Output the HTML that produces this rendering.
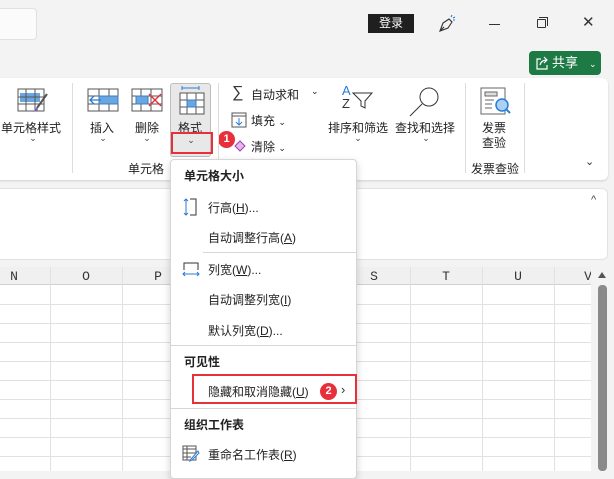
<!DOCTYPE html>
<html><head><meta charset="utf-8"><style>
*{margin:0;padding:0;box-sizing:border-box}
body{width:614px;height:471px;overflow:hidden;background:#f3f3f3;font-family:"Liberation Sans","Noto Sans CJK SC",sans-serif;font-size:12px;color:#222;position:relative}
.a{position:absolute;white-space:nowrap}
.sep{position:absolute;width:1px;background:#dcdcdc}
.lbl{position:absolute;transform:translateX(-50%);text-align:center;white-space:nowrap;font-size:12px}
.chev{position:absolute;font-size:9px;transform:translateX(-50%);color:#444}
.hline{position:absolute;left:0;width:591px;height:1px;background:#e1e1e1}
.vline{position:absolute;top:267px;bottom:0;width:1px;background:#e1e1e1}
.col{position:absolute;top:267px;height:18px;line-height:20px;font-family:"Liberation Mono",monospace;font-size:13px;color:#333;transform:translateX(-50%)}
.mi{position:absolute;left:208px;font-size:12px;color:#222}
.mb{position:absolute;left:184px;font-size:12px;font-weight:bold;color:#222}
.badge{position:absolute;width:17px;height:17px;border-radius:50%;background:#e8303a;color:#fff;font-size:11px;font-weight:bold;text-align:center;line-height:17px}
</style></head><body>
<!-- title bar -->
<div class="a" style="left:-4px;top:8px;width:41px;height:32px;background:#fbfbfb;border:1px solid #e0e0e0;border-radius:4px"></div>
<div class="a" style="left:368px;top:14px;width:46px;height:19px;background:#1f1f1f;color:#fff;text-align:center;line-height:19px;font-size:12px">登录</div>
<svg class="a" style="left:437px;top:14px" width="20" height="20" viewBox="0 0 20 20" fill="none" stroke="#333" stroke-width="1.1"><path d="M3 17 L6 9 L12 5 L15 8 L11 14 Z M3 17 L7 13"/><path d="M14 3 L15 1 M16 4 L18 3 M16 6 L18 6" stroke="#2a7bd4"/></svg>
<div class="a" style="left:489px;top:24px;width:11px;height:1px;background:#333"></div>
<div class="a" style="left:537px;top:19px;width:9px;height:9px;border:1px solid #333;border-radius:1px"></div>
<div class="a" style="left:539px;top:17px;width:9px;height:9px;border-top:1px solid #333;border-right:1px solid #333"></div>
<div class="a" style="left:582px;top:13px;font-size:15px;color:#333">✕</div>
<!-- share -->
<div class="a" style="left:529px;top:51px;width:72px;height:24px;background:#1e7a45;border-radius:4px;color:#fff;font-size:13px;line-height:24px">
<svg class="a" style="left:6px;top:5px" width="14" height="14" viewBox="0 0 14 14" fill="none" stroke="#fff" stroke-width="1.2"><path d="M6 3H2v10h10V9"/><path d="M5 9 C6 5 9 4 12 4 M9 1 L12 4 L9 7"/></svg>
<span class="a" style="left:23px;top:0">共享</span><span class="a" style="left:60px;top:1px;font-size:9px">⌄</span></div>
<!-- ribbon panel -->
<div class="a" style="left:-10px;top:78px;width:618px;height:102px;background:#fff;border-radius:6px;box-shadow:0 1px 2px rgba(0,0,0,.15)"></div>
<!-- 单元格样式 -->
<svg class="a" style="left:17px;top:88px" width="32" height="26" viewBox="0 0 32 26"><rect x="1" y="1" width="26" height="22" fill="#fff" stroke="#555"/><rect x="3" y="5" width="20" height="9" fill="#6aa7e0"/><path d="M1 9H27M1 16H27M9 1V23M18 1V23" stroke="#555" stroke-width="1"/><path d="M30 6 L20 20" stroke="#555" stroke-width="2"/><path d="M20 19 l-4 5 l5 -2 z" fill="#7c5cc4"/></svg>
<div class="lbl" style="left:31px;top:119px">单元格样式</div><div class="chev" style="left:33px;top:133px">⌄</div>
<div class="sep" style="left:72px;top:83px;height:90px"></div>
<!-- 插入 -->
<svg class="a" style="left:87px;top:88px" width="32" height="24" viewBox="0 0 32 24"><rect x="1" y="1" width="30" height="22" fill="#fff" stroke="#555"/><path d="M1 8H31M1 16H31M12 1V23M22 1V23" stroke="#555"/><rect x="12" y="8" width="19" height="8" fill="#6aa7e0" stroke="#3c7cc4"/><path d="M14 12H3M7 8L3 12L7 16" stroke="#2a7bd4" fill="none" stroke-width="1.3"/></svg>
<div class="lbl" style="left:102px;top:119px">插入</div><div class="chev" style="left:103px;top:133px">⌄</div>
<!-- 删除 -->
<svg class="a" style="left:131px;top:88px" width="32" height="24" viewBox="0 0 32 24"><rect x="1" y="1" width="30" height="22" fill="#fff" stroke="#555"/><path d="M1 8H31M1 16H31M10 1V23M20 1V23" stroke="#555"/><rect x="5" y="8" width="12" height="8" fill="#6aa7e0" stroke="#3c7cc4"/><path d="M18 6L30 18M30 6L18 18" stroke="#e8303a" stroke-width="1.4"/></svg>
<div class="lbl" style="left:147px;top:119px">删除</div><div class="chev" style="left:147px;top:133px">⌄</div>
<!-- 格式 -->
<div class="a" style="left:170px;top:83px;width:41px;height:74px;background:#e8e8e8;border:1px solid #bdbdbd;border-radius:3px"></div>
<svg class="a" style="left:175px;top:85px" width="32" height="30" viewBox="0 0 32 30"><path d="M7 3H24M7 1V5M24 1V5" stroke="#2a7bd4"/><rect x="5" y="8" width="24" height="21" fill="#fff" stroke="#555"/><path d="M5 15H29M5 22H29M12 8V29M21 8V29" stroke="#555"/><rect x="12" y="15" width="9" height="7" fill="#6aa7e0" stroke="#3c7cc4"/></svg>
<div class="lbl" style="left:190px;top:119px">格式</div>
<div class="a" style="left:171px;top:132px;width:42px;height:22px;border:2.5px solid #e8303a"></div>
<div class="chev" style="left:191px;top:135px">⌄</div>
<div class="badge" style="left:218px;top:131px">1</div>
<div class="lbl" style="left:146px;top:160px">单元格</div>
<div class="sep" style="left:218px;top:83px;height:90px"></div>
<!-- 编辑 -->
<div class="a" style="left:232px;top:84px;font-size:16px;color:#333">∑</div>
<div class="a" style="left:251px;top:86px">自动求和</div><div class="a" style="left:311px;top:86px;font-size:9px">⌄</div>
<svg class="a" style="left:231px;top:112px" width="16" height="16" viewBox="0 0 16 16"><rect x="1" y="1" width="14" height="14" fill="#fff" stroke="#555"/><path d="M1 4H15" stroke="#555"/><path d="M8 6V13M5 10L8 13L11 10" stroke="#2a7bd4" fill="none"/></svg>
<div class="a" style="left:251px;top:112px">填充 <span style="font-size:9px">⌄</span></div>
<svg class="a" style="left:233px;top:138px" width="14" height="14" viewBox="0 0 14 14"><path d="M2 8L7 3L12 8L7 13Z" fill="#e8b6e8" stroke="#9b3fb5"/></svg>
<div class="a" style="left:251px;top:138px">清除 <span style="font-size:9px">⌄</span></div>
<!-- 排序 -->
<div class="a" style="left:342px;top:84px;font-size:13px;color:#2a7bd4;line-height:13px">A<br><span style="color:#333">Z</span></div>
<svg class="a" style="left:352px;top:92px" width="22" height="18" viewBox="0 0 22 18" fill="none" stroke="#333"><path d="M1 1H20L13 9V16L9 14V9Z"/></svg>
<div class="lbl" style="left:358px;top:119px">排序和筛选</div><div class="chev" style="left:358px;top:133px">⌄</div>
<svg class="a" style="left:408px;top:86px" width="34" height="32" viewBox="0 0 34 32" fill="none" stroke="#333"><circle cx="21" cy="11" r="9" fill="#fff"/><path d="M14 18L2 30"/></svg>
<div class="lbl" style="left:425px;top:119px">查找和选择</div><div class="chev" style="left:426px;top:133px">⌄</div>
<div class="sep" style="left:465px;top:83px;height:90px"></div>
<svg class="a" style="left:480px;top:87px" width="32" height="28" viewBox="0 0 32 28" fill="none"><rect x="1" y="1" width="24" height="26" fill="#fff" stroke="#666"/><rect x="5" y="5" width="12" height="4" fill="#ddd" stroke="#666"/><path d="M5 13H14M5 17H12M5 21H12" stroke="#666"/><circle cx="22" cy="18" r="6" fill="#a9d1f3" stroke="#2a7bd4" stroke-width="1.5"/><path d="M26 22L30 26" stroke="#2a7bd4" stroke-width="2"/></svg>
<div class="lbl" style="left:494px;top:119px">发票</div><div class="lbl" style="left:494px;top:134px">查验</div>
<div class="lbl" style="left:495px;top:160px">发票查验</div>
<div class="sep" style="left:524px;top:83px;height:90px"></div>
<div class="a" style="left:585px;top:155px;font-size:11px;color:#333">⌄</div>
<!-- formula area -->
<div class="a" style="left:-10px;top:188px;width:618px;height:72px;background:#fff;border-radius:6px;border:1px solid #e2e2e2"></div>
<div class="a" style="left:591px;top:194px;font-size:11px;color:#444">^</div>
<!-- grid -->
<div class="a" style="left:0;top:267px;width:591px;height:204px;background:#fff"></div>
<div class="a" style="left:0;top:267px;width:591px;height:18px;background:#f0f0f0;border-bottom:1px solid #d0d0d0"></div>
<div class="hline" style="top:304px"></div><div class="hline" style="top:323px"></div><div class="hline" style="top:342px"></div><div class="hline" style="top:361px"></div><div class="hline" style="top:380px"></div><div class="hline" style="top:399px"></div><div class="hline" style="top:418px"></div><div class="hline" style="top:437px"></div><div class="hline" style="top:456px"></div>
<div class="vline" style="left:50px"></div><div class="vline" style="left:122px"></div><div class="vline" style="left:194px"></div><div class="vline" style="left:338px"></div><div class="vline" style="left:410px"></div><div class="vline" style="left:482px"></div><div class="vline" style="left:554px"></div>
<div class="col" style="left:14px">N</div><div class="col" style="left:86px">O</div><div class="col" style="left:158px">P</div><div class="col" style="left:374px">S</div><div class="col" style="left:446px">T</div><div class="col" style="left:518px">U</div><div class="col" style="left:588px">V</div>
<!-- scrollbar -->
<div class="a" style="left:591px;top:262px;width:23px;height:209px;background:#f3f3f3"></div>
<div class="a" style="left:598px;top:272px;width:0;height:0;border-left:4px solid transparent;border-right:4px solid transparent;border-bottom:6px solid #555"></div>
<div class="a" style="left:598px;top:285px;width:9px;height:186px;background:#8a8a8a;border-radius:4px"></div>
<!-- menu -->
<div class="a" style="left:170px;top:159px;width:187px;height:320px;background:#fff;border:1px solid #d6d6d6;border-radius:4px;box-shadow:0 3px 8px rgba(0,0,0,.18)"></div>
<div class="mb" style="top:167px">单元格大小</div>
<svg class="a" style="left:183px;top:198px" width="15" height="18" viewBox="0 0 15 18" fill="none"><path d="M7 1H13V17H7" stroke="#333"/><path d="M3 1V17M1 3L3 1L5 3M1 15L3 17L5 15" stroke="#2a7bd4"/></svg>
<div class="mi" style="top:199px">行高(<u>H</u>)...</div>
<div class="mi" style="top:229px">自动调整行高(<u>A</u>)</div>
<div class="a" style="left:203px;top:252px;width:154px;height:1px;background:#d6d6d6"></div>
<svg class="a" style="left:182px;top:262px" width="18" height="15" viewBox="0 0 18 15" fill="none"><path d="M2 8V1H16V8" stroke="#333"/><path d="M1 12H17M3 10L1 12L3 14M15 10L17 12L15 14" stroke="#2a7bd4"/></svg>
<div class="mi" style="top:261px">列宽(<u>W</u>)...</div>
<div class="mi" style="top:291px">自动调整列宽(<u>I</u>)</div>
<div class="mi" style="top:322px">默认列宽(<u>D</u>)...</div>
<div class="a" style="left:171px;top:345px;width:186px;height:1px;background:#d6d6d6"></div>
<div class="mb" style="top:353px">可见性</div>
<div class="a" style="left:192px;top:374px;width:165px;height:30px;border:2.5px solid #e8303a"></div>
<div class="mi" style="top:383px">隐藏和取消隐藏(<u>U</u>)</div>
<div class="badge" style="left:320px;top:383px">2</div>
<div class="a" style="left:341px;top:382px;font-size:13px;color:#333">›</div>
<div class="a" style="left:171px;top:408px;width:186px;height:1px;background:#d6d6d6"></div>
<div class="mb" style="top:416px">组织工作表</div>
<svg class="a" style="left:182px;top:445px" width="18" height="17" viewBox="0 0 18 17" fill="none"><rect x="1" y="1" width="13" height="14" stroke="#555"/><path d="M1 4H14M1 8H14M1 12H9M5 1V15" stroke="#555"/><path d="M16 6L9 14L8 16L10 15L17 8Z" fill="#fff" stroke="#2a7bd4"/></svg>
<div class="mi" style="top:446px">重命名工作表(<u>R</u>)</div>
</body></html>
